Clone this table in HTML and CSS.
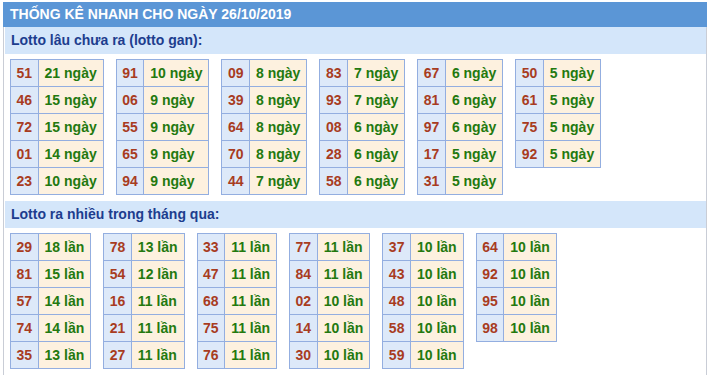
FILE: index.html
```html
<!DOCTYPE html>
<html lang="vi">
<head>
<meta charset="utf-8">
<title>Thống kê nhanh</title>
<link rel="stylesheet" href="styles.css">
</head>
<body>
<div class="wrap">
  <div class="title">THỐNG KÊ NHANH CHO NGÀY 26/10/2019</div>
  <div class="box">
    <div class="sub">Lotto lâu chưa ra (lotto gan):</div>
    <div class="tables">
      <table><tr><td class="n">51</td><td class="v">21 ngày</td></tr><tr><td class="n">46</td><td class="v">15 ngày</td></tr><tr><td class="n">72</td><td class="v">15 ngày</td></tr><tr><td class="n">01</td><td class="v">14 ngày</td></tr><tr><td class="n">23</td><td class="v">10 ngày</td></tr></table>
      <table><tr><td class="n">91</td><td class="v">10 ngày</td></tr><tr><td class="n">06</td><td class="v">9 ngày</td></tr><tr><td class="n">55</td><td class="v">9 ngày</td></tr><tr><td class="n">65</td><td class="v">9 ngày</td></tr><tr><td class="n">94</td><td class="v">9 ngày</td></tr></table>
      <table><tr><td class="n">09</td><td class="v">8 ngày</td></tr><tr><td class="n">39</td><td class="v">8 ngày</td></tr><tr><td class="n">64</td><td class="v">8 ngày</td></tr><tr><td class="n">70</td><td class="v">8 ngày</td></tr><tr><td class="n">44</td><td class="v">7 ngày</td></tr></table>
      <table><tr><td class="n">83</td><td class="v">7 ngày</td></tr><tr><td class="n">93</td><td class="v">7 ngày</td></tr><tr><td class="n">08</td><td class="v">6 ngày</td></tr><tr><td class="n">28</td><td class="v">6 ngày</td></tr><tr><td class="n">58</td><td class="v">6 ngày</td></tr></table>
      <table><tr><td class="n">67</td><td class="v">6 ngày</td></tr><tr><td class="n">81</td><td class="v">6 ngày</td></tr><tr><td class="n">97</td><td class="v">6 ngày</td></tr><tr><td class="n">17</td><td class="v">5 ngày</td></tr><tr><td class="n">31</td><td class="v">5 ngày</td></tr></table>
      <table><tr><td class="n">50</td><td class="v">5 ngày</td></tr><tr><td class="n">61</td><td class="v">5 ngày</td></tr><tr><td class="n">75</td><td class="v">5 ngày</td></tr><tr><td class="n">92</td><td class="v">5 ngày</td></tr></table>
    </div>
    <div class="sub">Lotto ra nhiều trong tháng qua:</div>
    <div class="tables">
      <table><tr><td class="n">29</td><td class="v">18 lần</td></tr><tr><td class="n">81</td><td class="v">15 lần</td></tr><tr><td class="n">57</td><td class="v">14 lần</td></tr><tr><td class="n">74</td><td class="v">14 lần</td></tr><tr><td class="n">35</td><td class="v">13 lần</td></tr></table>
      <table><tr><td class="n">78</td><td class="v">13 lần</td></tr><tr><td class="n">54</td><td class="v">12 lần</td></tr><tr><td class="n">16</td><td class="v">11 lần</td></tr><tr><td class="n">21</td><td class="v">11 lần</td></tr><tr><td class="n">27</td><td class="v">11 lần</td></tr></table>
      <table><tr><td class="n">33</td><td class="v">11 lần</td></tr><tr><td class="n">47</td><td class="v">11 lần</td></tr><tr><td class="n">68</td><td class="v">11 lần</td></tr><tr><td class="n">75</td><td class="v">11 lần</td></tr><tr><td class="n">76</td><td class="v">11 lần</td></tr></table>
      <table><tr><td class="n">77</td><td class="v">11 lần</td></tr><tr><td class="n">84</td><td class="v">11 lần</td></tr><tr><td class="n">02</td><td class="v">10 lần</td></tr><tr><td class="n">14</td><td class="v">10 lần</td></tr><tr><td class="n">30</td><td class="v">10 lần</td></tr></table>
      <table><tr><td class="n">37</td><td class="v">10 lần</td></tr><tr><td class="n">43</td><td class="v">10 lần</td></tr><tr><td class="n">48</td><td class="v">10 lần</td></tr><tr><td class="n">58</td><td class="v">10 lần</td></tr><tr><td class="n">59</td><td class="v">10 lần</td></tr></table>
      <table><tr><td class="n">64</td><td class="v">10 lần</td></tr><tr><td class="n">92</td><td class="v">10 lần</td></tr><tr><td class="n">95</td><td class="v">10 lần</td></tr><tr><td class="n">98</td><td class="v">10 lần</td></tr></table>
    </div>
  </div>
</div>
</body>
</html>
```
FILE: styles.css
```css
html, body {
  margin: 0;
  padding: 0;
  background: #ffffff;
}
body {
  font-family: "Liberation Sans", Arial, sans-serif;
  font-size: 14px;
  font-weight: bold;
}
.wrap {
  margin: 2px 0 0 3px;
  width: 704px;
}
.title {
  background: #5b96d6;
  color: #ffffff;
  height: 25px;
  line-height: 25px;
  padding-left: 7px;
  font-size: 14px;
}
.box {
  border-left: 1px solid #c9cdd6;
  border-right: 1px solid #c9cdd6;
  padding: 0 0 3px 1px;
}
.sub {
  background: #d4e6fa;
  color: #1d3d8e;
  height: 27px;
  line-height: 27px;
  padding-left: 6px;
}
.tables {
  display: flex;
  align-items: flex-start;
  gap: 12px;
  padding: 6px 0 6px 5px;
}
.sub + .tables {
  padding-top: 5px;
}
table {
  border-collapse: collapse;
}
td {
  border: 1px solid #93aee0;
  height: 26px;
  padding: 0 6px;
  line-height: 26px;
  white-space: nowrap;
}
td.n {
  padding: 0 5.5px;
  background: #dde9f9;
  color: #a83c1f;
}
td.v {
  background: #fdf1df;
  color: #23790f;
}
```
